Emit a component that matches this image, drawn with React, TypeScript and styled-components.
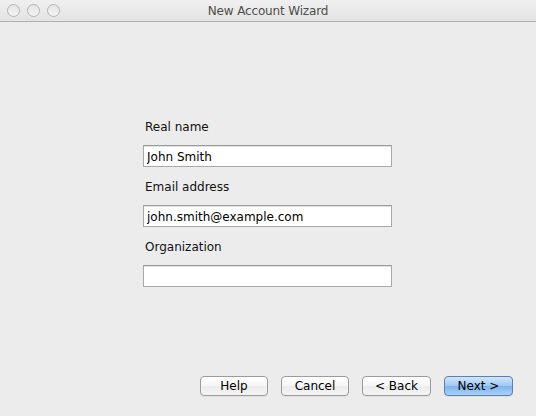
import React, { useState } from 'react'
import styled, { createGlobalStyle } from 'styled-components'

const GlobalStyle = createGlobalStyle`
  html, body {
    margin: 0;
    padding: 0;
    background: #ececec;
  }
  body {
    font-family: "DejaVu Sans", "Liberation Sans", sans-serif;
    font-size: 12px;
    color: #000;
  }
`

const Window = styled.div`
  width: 536px;
  height: 416px;
  display: flex;
  flex-direction: column;
  background: #ececec;
  overflow: hidden;
`

const TitleBar = styled.div`
  height: 21px;
  flex: none;
  display: grid;
  grid-template-columns: 80px 1fr 80px;
  align-items: center;
  background: linear-gradient(#f0f0f0, #e3e3e3);
  border-bottom: 1px solid #b0b0b0;
`

const Lights = styled.div`
  display: flex;
  gap: 7px;
  padding-left: 7px;
`

const Light = styled.span`
  width: 11px;
  height: 11px;
  border-radius: 50%;
  border: 1px solid #b4b4b4;
  background: linear-gradient(#e4e4e4, #f4f4f4);
`

const Title = styled.div`
  text-align: center;
  color: #4d4d4d;
  font-size: 12px;
  letter-spacing: -0.15px;
`

const Body = styled.div`
  flex: 1;
  display: flex;
  flex-direction: column;
  padding: 0 23px 20px 0;
`

const Form = styled.div`
  flex: 1;
  display: flex;
  flex-direction: column;
  width: 249px;
  margin-left: 143px;
  padding-top: 97px;
`

const Field = styled.div`
  display: flex;
  flex-direction: column;
  margin-bottom: 12px;
`

const Label = styled.label`
  line-height: 16px;
  padding-left: 2px;
  margin-bottom: 10px;
  color: #111;
`

const Input = styled.input`
  box-sizing: border-box;
  width: 249px;
  height: 22px;
  margin: 0;
  padding: 2px 3px 0;
  border: 1px solid #a9a9a9;
  border-top-color: #9a9a9a;
  box-shadow: inset 0 1px 0 #e2e2e2;
  background: #fff;
  font-family: inherit;
  font-size: 12px;
  color: #000;
  outline: none;
`

const Buttons = styled.div`
  display: flex;
  justify-content: flex-end;
  gap: 13px;
`

const Button = styled.button<{ $primary?: boolean; $w: number }>`
  box-sizing: border-box;
  width: ${p => p.$w}px;
  height: 20px;
  padding: 0;
  border-radius: 4px;
  font-family: inherit;
  font-size: 12px;
  line-height: 18px;
  color: #000;
  border: 1px solid ${p => (p.$primary ? '#5a7fb8' : '#9c9c9c')};
  background: ${p =>
    p.$primary
      ? 'linear-gradient(#d3e6fb 0%, #9ec7f3 50%, #7db3ee 51%, #a9d2f8 100%)'
      : 'linear-gradient(#ffffff 0%, #f6f6f6 50%, #ececec 51%, #f4f4f4 100%)'};
  box-shadow: 0 1px 0 rgba(0, 0, 0, 0.06);
  cursor: default;
`

const fields = [
  { label: 'Real name', value: 'John Smith' },
  { label: 'Email address', value: 'john.smith@example.com' },
  { label: 'Organization', value: '' },
]

const App = () => {
  const [values, setValues] = useState<string[]>(fields.map(f => f.value))

  const handleChange = (i: number, v: string) => {
    const next = [...values]
    next[i] = v
    setValues(next)
  }

  return (
    <Window>
      <GlobalStyle />
      <TitleBar>
        <Lights>
          <Light />
          <Light />
          <Light />
        </Lights>
        <Title>New Account Wizard</Title>
        <div />
      </TitleBar>
      <Body>
        <Form>
          {fields.map((f, i) => (
            <Field key={f.label}>
              <Label>{f.label}</Label>
              <Input value={values[i]} onChange={e => handleChange(i, e.target.value)} />
            </Field>
          ))}
        </Form>
        <Buttons>
          <Button $w={68}>Help</Button>
          <Button $w={68}>Cancel</Button>
          <Button $w={69}>&lt; Back</Button>
          <Button $w={69} $primary>Next &gt;</Button>
        </Buttons>
      </Body>
    </Window>
  )
}

export default App
